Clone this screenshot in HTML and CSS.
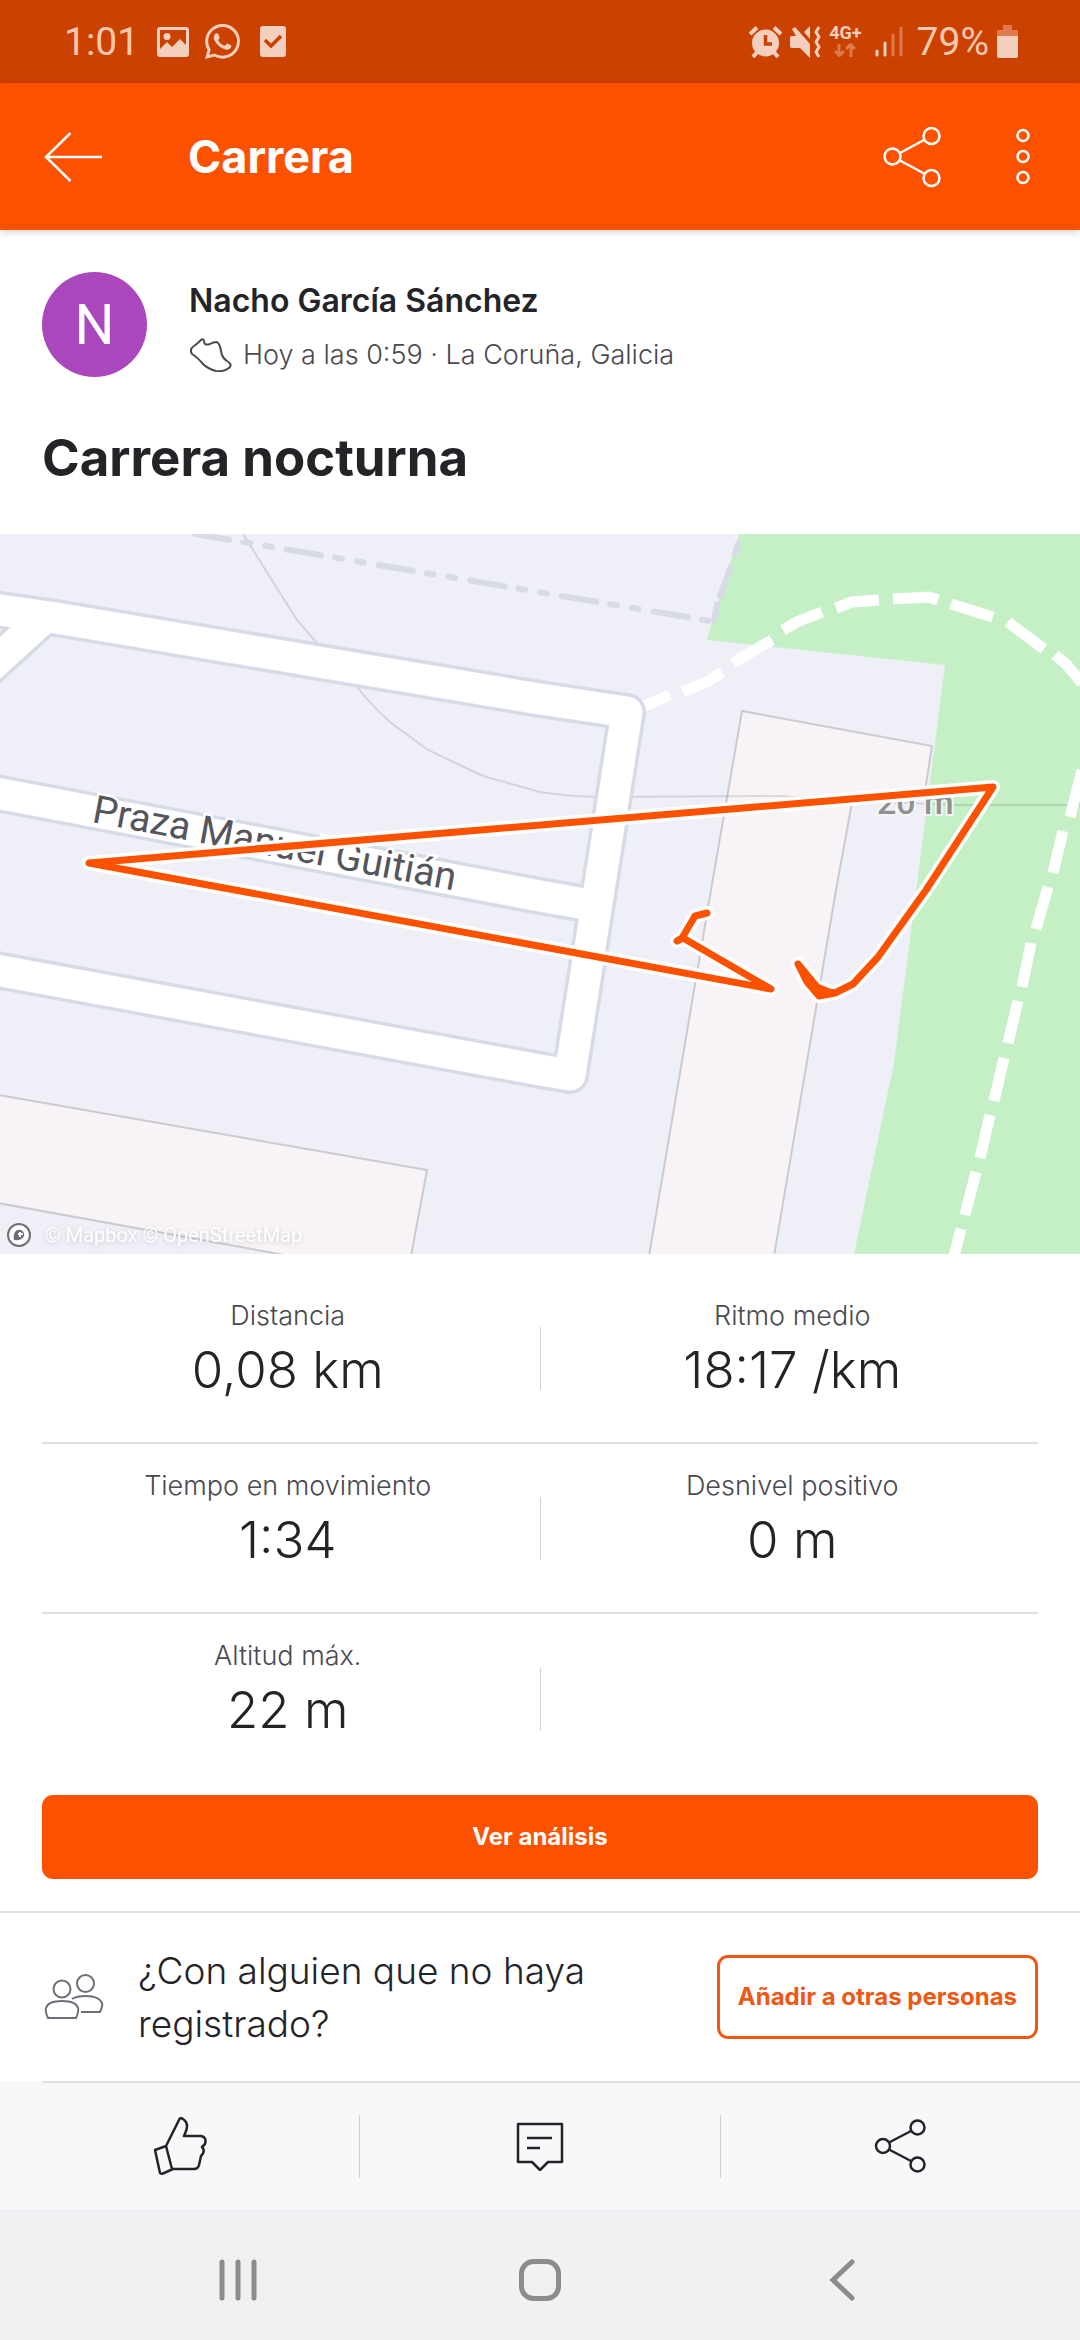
FILE: index.html
```html
<!DOCTYPE html>
<html lang="es">
<head>
<meta charset="utf-8">
<meta name="viewport" content="width=device-width, initial-scale=1">
<title>Carrera nocturna</title>
<link rel="stylesheet" href="styles.css">
</head>
<body>
<div class="status">
  <span class="status-text">1:01</span>
  <div class="status-left">
    <svg width="32" height="30" viewBox="0 0 32 30"><path fill-rule="evenodd" fill="currentColor" d="M3 0h26q3 0 3 3v24q0 3-3 3H3q-3 0-3-3V3q0-3 3-3zM3 3v19l7-7 5 5 8-8 6 6V3zM10 6a3.500 3.500 0 1 1 0 7 3.500 3.500 0 0 1 0-7z"/></svg>
    <svg width="35" height="35" viewBox="0 0 24 24"><path fill="currentColor" d="M17.472 14.382c-.297-.149-1.758-.867-2.03-.967-.273-.099-.471-.148-.67.15-.197.297-.767.966-.94 1.164-.173.199-.347.223-.644.075-.297-.15-1.255-.463-2.39-1.475-.883-.788-1.48-1.761-1.653-2.059-.173-.297-.018-.458.13-.606.134-.133.298-.347.446-.52.149-.174.198-.298.298-.497.099-.198.05-.371-.025-.52-.075-.149-.669-1.612-.916-2.207-.242-.579-.487-.5-.669-.51-.173-.008-.371-.01-.57-.01-.198 0-.52.074-.792.372-.272.297-1.04 1.016-1.04 2.479 0 1.462 1.065 2.875 1.213 3.074.149.198 2.096 3.2 5.077 4.487.709.306 1.262.489 1.694.625.712.227 1.36.195 1.871.118.571-.085 1.758-.719 2.006-1.413.248-.694.248-1.289.173-1.413-.074-.124-.272-.198-.57-.347m-5.421 7.403h-.004a9.87 9.87 0 01-5.031-1.378l-.361-.214-3.741.982.998-3.648-.235-.374a9.86 9.86 0 01-1.51-5.26c.001-5.45 4.436-9.884 9.888-9.884 2.64 0 5.122 1.03 6.988 2.898a9.825 9.825 0 012.893 6.994c-.003 5.45-4.437 9.884-9.885 9.884m8.413-18.297A11.815 11.815 0 0012.05 0C5.495 0 .16 5.335.157 11.892c0 2.096.547 4.142 1.588 5.945L.057 24l6.305-1.654a11.882 11.882 0 005.683 1.448h.005c6.554 0 11.89-5.335 11.893-11.893a11.821 11.821 0 00-3.48-8.413z"/></svg>
    <svg class="note" width="26" height="31" viewBox="0 0 26 31"><rect width="26" height="31" rx="3" fill="currentColor"/><path d="M5 14l6 6 10-10" fill="none" stroke="#cb4100" stroke-width="3.500"/></svg>
  </div>
  <div class="status-right">
    <svg width="33" height="32" viewBox="0 0 33 32"><g fill="none" stroke="currentColor" stroke-width="4"><path d="M1 8l7-6.500M32 8l-7-6.500M4 31l5-6M29 31l-5-6"/></g><circle cx="16.500" cy="17" r="13.500" fill="currentColor"/><path d="M16.500 9v9H23" fill="none" stroke="#cb4100" stroke-width="3.500"/></svg>
    <svg width="31" height="32" viewBox="0 0 31 32"><path fill="currentColor" d="M0 12q0-2 2-2h4L2 3l3-2 15 17v14L10 22H2q-2 0-2-2zM14 6l6-6v13z"/><path d="M29 1l-3 5 3 5-3 5 3 5-3 5 3 5" fill="none" stroke="currentColor" stroke-width="3"/></svg>
    <div class="network">
      <span>4G+</span>
      <svg width="22" height="14" viewBox="0 0 22 14"><path d="M5 1v11M1 8l4.500 4.500L10 8M17 14V2M12 6l4.500-4.500L21 6" fill="none" stroke="#de7a4d" stroke-width="3"/></svg>
    </div>
    <svg class="signal" width="28" height="31" viewBox="0 0 28 31"><g stroke-width="3" stroke-linecap="round"><path stroke="currentColor" d="M2 25v4M10 17v12"/><path stroke="#de7a4d" d="M18 9v20M26 2v27"/></g></svg>
    <span class="status-text">79%</span>
    <svg class="battery" width="21" height="33" viewBox="0 0 21 33"><path fill="#de7a4d" d="M6 0h9v5h6v7H0V5h6z"/><path fill="currentColor" d="M0 11h21v20q0 2-2 2H2q-2 0-2-2z"/></svg>
  </div>
</div>

<header class="appbar">
  <button class="icon-btn" aria-label="Atrás"><svg width="58" height="50" viewBox="0 0 58 50"><path d="M26.500 1L2 25l24.500 24M2 25h56" fill="none" stroke="currentColor" stroke-width="2.500"/></svg></button>
  <h2 class="appbar-title">Carrera</h2>
  <button class="icon-btn" aria-label="Compartir"><svg width="58" height="62" viewBox="0 0 58 62"><g fill="none" stroke="currentColor" stroke-width="2.500"><circle cx="9.500" cy="30.500" r="8"/><circle cx="48.500" cy="10" r="8"/><circle cx="48.500" cy="52" r="8"/><path d="M17 27l24-13M17 34.500l24 13"/></g></svg></button>
  <button class="icon-btn" aria-label="Más opciones"><svg width="14" height="58" viewBox="0 0 14 58"><g fill="none" stroke="currentColor" stroke-width="2.500"><circle cx="7" cy="7.500" r="5.500"/><circle cx="7" cy="28.500" r="5.500"/><circle cx="7" cy="49.500" r="5.500"/></g></svg></button>
</header>

<main>
  <section class="summary">
    <div class="athlete">
      <div class="avatar">N</div>
      <div class="athlete-text">
        <p class="name">Nacho García Sánchez</p>
        <p class="meta">
          <svg width="43" height="34" viewBox="0 0 43 34"><path d="M12 2Q8 6 5 8Q0 11 3 16Q8 19 14 26Q19 31 27 33Q36 34 41 29Q43 26 38 23Q33 20 32 13Q31 6 28 4Q24 4 21 6Q15 8 15 3Q14 0 12 2Z" fill="none" stroke="currentColor" stroke-width="2"/></svg>
          <span>Hoy a las 0:59 · La Coruña, Galicia</span>
        </p>
      </div>
    </div>
    <h1 class="title">Carrera nocturna</h1>
  </section>

  <svg class="map" viewBox="0 0 1080 720" role="img" aria-label="Mapa del recorrido">
    <rect width="1080" height="720" fill="#eeeff7"/>
    <path d="M739 0L707 106 945 131 918 343 912 389 894 529 854 720H1080V0Z" fill="#c5f0c6"/>
    <g fill="#f7f3f6" stroke="#cbcbcf" stroke-width="2">
      <path d="M649 722L711 356 742 177 932 212 924 263 853 263 836 356 774 722Z"/>
      <path d="M-2 561L427 636 411 722H290L-2 669Z"/>
    </g>
    <path d="M243 0L297 86 317 109 357 153Q372 172 390 188L428 216 483 242 540 258Q565 262 595 263L780 262 860 267 955 271H1080" fill="none" stroke="#000" stroke-opacity=".11" stroke-width="2"/>
    <path d="M195 0L710 87" fill="none" stroke="#d7dbe6" stroke-width="6" stroke-linecap="round" stroke-dasharray="35 14 7 15 7 15"/>
    <path d="M714 86L717 70M720 62L731 32M735 20L738 10" fill="none" stroke="#d7dbe6" stroke-width="6" stroke-linecap="round"/>
    <path d="M640 174L670 161M683 158L709 147 722 138M733 129L772 106M783 96L797 88 822 78M836 74L852 68 879 66M893 65L929 63 938 66M951 70L993 83M1008 88L1044 115M1055 121L1066 130 1082 149M1082 236L1070 283M1063 297L1053 339M1048 353L1036 395M1031 409L1022 453M1018 467L1008 509M1004 524L994 567M990 581L980 624M976 638L965 681M961 695L954 722" fill="none" stroke="#fff" stroke-width="11"/>
    <g fill="none" stroke-linejoin="round">
      <g stroke="#d6dbe7" stroke-width="38"><path d="M-20 73L0 76 50 83 540 165 627 178 570 541 540 536-20 433"/><path d="M-20 256L540 362 596 372"/><path d="M-20 142L45 83"/></g>
      <g stroke="#fff" stroke-width="31"><path d="M-20 73L0 76 50 83 540 165 627 178 570 541 540 536-20 433"/><path d="M-20 256L540 362 596 372"/><path d="M-20 142L45 83"/></g>
    </g>
    <text class="street" transform="translate(91 288) rotate(10.700)">Praza Manuel Guitián</text>
    <text class="elevation" x="877" y="280">20 m</text>
    <g fill="none" stroke-linecap="round" stroke-linejoin="round">
      <path d="M707 379L695 382 682 404 677 407 683 404 771 455 89 329 993 253 926 356 878 423 853 450 835 459 819 462 807 448 798 430 817 453 829 458 835 459" stroke="#fff" stroke-width="14"/>
      <path d="M707 379L695 382 682 404 677 407 683 404 771 455 89 329 993 253 926 356 878 423 853 450 835 459 819 462 807 448 798 430 817 453 829 458 835 459" stroke="#fc5200" stroke-width="7"/>
      <path d="M798 430L817 453 829 458 819 463 807 448Z" fill="#fc5200"/>
    </g>
    <circle cx="19" cy="701" r="11" fill="#fff" stroke="#6e6e78" stroke-width="2"/>
    <path d="M14 706Q13 701 15 698 17 695 21 696 25 698 24 702 22 707 14 706Z" fill="#6e6e78"/>
    <path d="M20 698v5M18 700h5" stroke="#fff" stroke-width="2"/>
    <text class="credit" x="45" y="708">© Mapbox © OpenStreetMap</text>
  </svg>

  <section class="stats">
    <div class="stat-row">
      <div class="stat"><p class="label">Distancia</p><p class="value">0,08 km</p></div>
      <div class="rule"></div>
      <div class="stat"><p class="label">Ritmo medio</p><p class="value">18:17 /km</p></div>
    </div>
    <div class="stat-row">
      <div class="stat"><p class="label">Tiempo en movimiento</p><p class="value">1:34</p></div>
      <div class="rule"></div>
      <div class="stat"><p class="label">Desnivel positivo</p><p class="value">0 m</p></div>
    </div>
    <div class="stat-row">
      <div class="stat"><p class="label">Altitud máx.</p><p class="value">22 m</p></div>
      <div class="rule"></div>
      <div class="stat"></div>
    </div>
    <button class="btn btn-primary">Ver análisis</button>
  </section>

  <section class="friends">
    <svg width="60" height="46" viewBox="0 0 60 46"><g fill="none" stroke="#6e6e78" stroke-width="2"><circle cx="18" cy="15" r="8.500"/><circle cx="41.500" cy="9.500" r="8.500"/><path d="M4 44Q1 38 2 34 4 27 18 27 32 27 34 34 35 38 32 44ZM28 25Q33 22 42 22 55 22 58 29 59 32 56 38H37"/></g></svg>
    <p class="question">¿Con alguien que no haya registrado?</p>
    <button class="btn btn-outline">Añadir a otras personas</button>
  </section>

  <div class="actions">
    <button class="action" aria-label="Dar kudos"><svg width="54" height="58" viewBox="0 0 54 58"><path d="M2 33L13 29 26 3Q27 0 30 2 36 6 33 14L31 19H48Q54 20 52 27L49 30Q53 34 48 39L46 48Q45 52 41 52H20L9 57 7 56ZM13 29L19 52" fill="none" stroke="currentColor" stroke-width="2.500" stroke-linejoin="round"/></svg></button>
    <div class="rule"></div>
    <button class="action" aria-label="Comentar"><svg width="50" height="50" viewBox="0 0 50 50"><path d="M3 3H47V41H33L25 49 17 41H3ZM12 17H37M12 27H25" fill="none" stroke="currentColor" stroke-width="2.500" stroke-linejoin="round"/></svg></button>
    <div class="rule"></div>
    <button class="action" aria-label="Compartir actividad"><svg width="52" height="54" viewBox="0 0 52 54"><g fill="none" stroke="currentColor" stroke-width="2.500"><circle cx="9" cy="27" r="7"/><circle cx="43.500" cy="8.500" r="7"/><circle cx="43.500" cy="45.500" r="7"/><path d="M15 23.500l22-11.500M15 30.500l22 11.500"/></g></svg></button>
  </div>
</main>

<nav class="sysnav">
  <button aria-label="Recientes"><svg width="38" height="42" viewBox="0 0 38 42"><path d="M3 3v36M19 3v36M35 3v36" stroke="currentColor" stroke-width="5" stroke-linecap="round"/></svg></button>
  <button aria-label="Inicio"><svg width="42" height="42" viewBox="0 0 42 42"><rect x="2.500" y="2.500" width="37" height="37" rx="12" fill="none" stroke="currentColor" stroke-width="5"/></svg></button>
  <button aria-label="Volver"><svg width="26" height="42" viewBox="0 0 26 42"><path d="M23 3L4 21 23 39" fill="none" stroke="currentColor" stroke-width="5" stroke-linecap="round"/></svg></button>
</nav>
</body>
</html>
```
FILE: styles.css
```css
* { box-sizing: border-box; margin: 0; }
body {
  min-height: 100vh;
  display: flex;
  flex-direction: column;
  background: #fff;
  color: #242428;
  font-family: Inter, "Liberation Sans", sans-serif;
}
button {
  border: 0;
  padding: 0;
  background: none;
  color: inherit;
  font: inherit;
}
svg { display: block; flex: none; }

.status {
  height: 83px;
  padding: 0 62px 0 64px;
  display: flex;
  align-items: center;
  background: #cb4100;
  color: #f4cfbd;
}
.status-text { font: 400 39px/40px Roboto, sans-serif; color: #f8c8ae; }
.status-left { display: flex; align-items: center; gap: 16px; margin-left: 18px; }
.note { margin-left: 4px; }
.status-right { display: flex; align-items: center; gap: 8px; margin-left: auto; }
.network { display: flex; flex-direction: column; align-items: center; gap: 3px; }
.network span { font: 700 18px/14px Roboto, sans-serif; }
.signal { margin: 0 6px 0 5px; }

.appbar {
  position: relative;
  height: 147px;
  padding: 0 50px 0 44px;
  display: flex;
  align-items: center;
  background: #fc5200;
  color: #fff;
  box-shadow: 0 2px 8px rgba(0, 0, 0, .18);
}
.appbar-title { flex: 1; margin-left: 86px; font-size: 45px; line-height: 56px; font-weight: 700; }
.icon-btn + .icon-btn { margin-left: 75px; }

.summary { padding: 42px 42px 44px; }
.athlete { display: flex; gap: 42px; }
.avatar {
  width: 105px;
  height: 105px;
  border-radius: 50%;
  background: #ab47bc;
  color: #fff;
  font: 400 56px/107px Roboto, sans-serif;
  text-align: center;
}
.athlete-text { padding-top: 2px; line-height: 54px; }
.name { font-size: 32px; font-weight: 600; }
.meta { display: flex; align-items: center; gap: 11px; font-size: 27px; font-weight: 350; color: #494950; }
.title { margin-top: 44px; font-size: 51px; line-height: 64px; font-weight: 700; }

.map { width: 100%; height: auto; }
.street {
  font: 400 39px Roboto, sans-serif;
  fill: #55555c;
  stroke: #fff;
  stroke-width: 5px;
  paint-order: stroke;
}
.elevation {
  font: 500 34px Roboto, sans-serif;
  fill: #8e918f;
  stroke: #f4f4f6;
  stroke-width: 4px;
  paint-order: stroke;
}
.credit {
  font: 400 20px Roboto, sans-serif;
  fill: #fff;
  filter: drop-shadow(0 1px 2px rgba(120, 120, 140, .3));
}

.stats { padding: 20px 42px 32px; }
.stat-row { display: flex; align-items: center; height: 170px; }
.stat-row:not(:nth-child(3)) { border-bottom: 2px solid #dfdfe3; }
.stat { flex: 1; align-self: flex-start; padding-top: 22px; text-align: center; }
.label { font-size: 27px; line-height: 40px; font-weight: 350; color: #494950; }
.value { font-size: 51px; line-height: 68px; font-weight: 350; }
.rule { width: 1px; height: 63px; margin: 0 6px; background: #d0d0d5; }

.btn { height: 84px; border-radius: 11px; font-size: 24px; line-height: 32px; font-weight: 700; }
.btn-primary { width: 100%; margin-top: 11px; display: block; background: #fc5200; color: #fff; }
.btn-outline { flex: none; padding: 0 18px; border: 3px solid #ee5714; color: #ee5714; }

.friends {
  display: flex;
  align-items: center;
  padding: 31px 42px 31px 44px;
  border-top: 2px solid #dfdfe3;
}
.question { flex: 1; margin: 0 60px 0 34px; font-size: 37px; line-height: 53px; font-weight: 350; }

.actions {
  position: relative;
  display: flex;
  align-items: center;
  height: 128px;
  padding-top: 2px;
  background: linear-gradient(#dfdfe3, #dfdfe3) 42px 0 / 100% 2px no-repeat, #f8f8fa;
}
.actions .rule { margin: 0; }
.action { flex: 1; height: 100%; display: grid; place-items: center; }

.sysnav {
  flex: 1;
  min-height: 130px;
  display: grid;
  grid-template-columns: repeat(3, 1fr);
  padding: 6px 8% 0;
  border-top: 5px solid #f0f0f5;
  background: #f1f1f1;
  color: #8c8c8c;
}
.sysnav button { display: grid; place-items: center; }
```
